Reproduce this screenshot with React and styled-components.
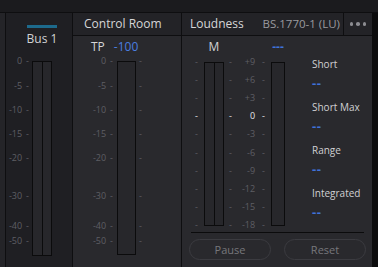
import React from "react";
import styled, { createGlobalStyle } from "styled-components";

const GlobalStyle = createGlobalStyle`
  html, body {
    margin: 0;
    padding: 0;
    background: #0c0c0d;
  }
  body {
    font-family: "Open Sans", "Noto Sans", sans-serif;
  }
`;

// dB scale used by bus + control room meters, y offset from bar top
const dbMarks = [
  { label: "0", y: 0 },
  { label: "-5", y: 25 },
  { label: "-10", y: 49 },
  { label: "-15", y: 73 },
  { label: "-20", y: 97 },
  { label: "-30", y: 135 },
  { label: "-40", y: 165 },
  { label: "-50", y: 180 },
];

const luMarks = ["+9", "+6", "+3", "0", "-3", "-6", "-9", "-12", "-15", "-18"].map(
  (label, i) => ({ label, y: Math.round(i * 18.1), hi: label === "0" })
);

const stats = ["Short", "Short Max", "Range", "Integrated"];

const App = () => {
  return (
    <>
      <GlobalStyle />
      <Screen>
        <TopStrip />
        <Panels>
          <EdgePanel />

          <BusPanel>
            <BusHead>
              <BusStripe />
              <BusName>Bus 1</BusName>
            </BusHead>
            <MeterRow $top={15}>
              <Scale $w={23} $h={195}>
                {dbMarks.map((m) => (
                  <Mark key={m.label} $y={m.y}>
                    {m.label}
                    <Tick>-</Tick>
                  </Mark>
                ))}
              </Scale>
              <Bar $w={20} $h={195} $gap={3}>
                <Channel />
                <Channel />
              </Bar>
            </MeterRow>
          </BusPanel>

          <ControlPanel>
            <PanelHeader>
              <Title>Control Room</Title>
            </PanelHeader>
            <TpRow>
              <TpLabel>TP</TpLabel>
              <TpValue>-100</TpValue>
            </TpRow>
            <MeterRow $top={7}>
              <Scale $w={40} $h={194}>
                {dbMarks.map((m) => (
                  <Mark key={m.label} $y={m.y}>
                    {m.label}
                    <Tick>-</Tick>
                  </Mark>
                ))}
              </Scale>
              <Bar $w={19} $h={194} $gap={4}>
                <Channel />
              </Bar>
              <Scale $w={6} $h={194} $left $gap={3}>
                {dbMarks.map((m) => (
                  <Mark key={m.label} $y={m.y} $left>
                    -
                  </Mark>
                ))}
              </Scale>
            </MeterRow>
          </ControlPanel>

          <LoudPanel>
            <PanelHeader>
              <Title>Loudness</Title>
              <Mode>BS.1770-1 (LU)</Mode>
              <MenuButton>
                <Dot />
                <Dot />
                <Dot />
              </MenuButton>
            </PanelHeader>
            <LoudBody>
              <MeterArea>
                <Scale $w={4} $h={164} $left $top={26}>
                  {luMarks.map((m) => (
                    <Mark key={m.label} $y={m.y} $left $hi={m.hi}>
                      -
                    </Mark>
                  ))}
                </Scale>
                <MeterColumn $gap={5}>
                  <MeterHeading>M</MeterHeading>
                  <Bar $w={20} $h={164}>
                    <Channel />
                    <Channel />
                  </Bar>
                </MeterColumn>
                <Scale $w={4} $h={164} $left $top={26} $gap={5}>
                  {luMarks.map((m) => (
                    <Mark key={m.label} $y={m.y} $left $hi={m.hi}>
                      -
                    </Mark>
                  ))}
                </Scale>
                <Scale $w={32} $h={164} $top={26}>
                  {luMarks.map((m) => (
                    <Mark key={m.label} $y={m.y} $hi={m.hi}>
                      {m.label}
                      <Tick $wide>-</Tick>
                    </Mark>
                  ))}
                </Scale>
                <MeterColumn $gap={6}>
                  <MeterHeading $blue>---</MeterHeading>
                  <Bar $w={14} $h={164}>
                    <Channel />
                  </Bar>
                </MeterColumn>
                <StatList>
                  {stats.map((s) => (
                    <Stat key={s}>
                      <StatLabel>{s}</StatLabel>
                      <StatValue>--</StatValue>
                    </Stat>
                  ))}
                </StatList>
              </MeterArea>
              <Divider />
              <ButtonRow>
                <PillButton>Pause</PillButton>
                <PillButton>Reset</PillButton>
              </ButtonRow>
            </LoudBody>
          </LoudPanel>
        </Panels>
      </Screen>
    </>
  );
};

export default App;

const Screen = styled.div`
  width: 378px;
  height: 267px;
  display: flex;
  flex-direction: column;
  background: #0c0c0d;
  overflow: hidden;
`;

const TopStrip = styled.div`
  height: 12px;
  background: #1b1b1e;
  border-bottom: 1px solid #0e0e10;
  flex-shrink: 0;
`;

const Panels = styled.div`
  flex: 1;
  display: flex;
`;

const EdgePanel = styled.div`
  width: 5px;
  background: #242428;
  border-right: 1px solid #0e0e10;
`;

const BusPanel = styled.div`
  width: 66px;
  background: #1f1f23;
  border-right: 1px solid #0e0e10;
  display: flex;
  flex-direction: column;
`;

const BusHead = styled.div`
  width: 30px;
  margin: 12px 0 0 21px;
  display: flex;
  flex-direction: column;
  align-items: center;
`;

const BusStripe = styled.div`
  width: 100%;
  height: 3px;
  background: #1d6a8c;
`;

const BusName = styled.div`
  margin-top: 4px;
  font-size: 12px;
  line-height: 14px;
  color: #d2d2d4;
  white-space: nowrap;
`;

const MeterRow = styled.div`
  display: flex;
  align-items: flex-start;
  margin-top: ${(p) => p.$top}px;
`;

const Scale = styled.div`
  position: relative;
  flex-shrink: 0;
  width: ${(p) => p.$w}px;
  height: ${(p) => p.$h}px;
  margin-left: ${(p) => p.$gap || 0}px;
  margin-top: ${(p) => p.$top || 0}px;
`;

const Mark = styled.span`
  position: absolute;
  top: ${(p) => p.$y - 6}px;
  ${(p) => (p.$left ? "left: 0;" : "right: 0;")}
  font-size: 9px;
  line-height: 12px;
  white-space: nowrap;
  color: ${(p) => (p.$hi ? "#e6e6e8" : "#5e5e64")};
`;

const Tick = styled.span`
  margin-left: ${(p) => (p.$wide ? 7 : 4)}px;
`;

const Bar = styled.div`
  display: flex;
  flex-shrink: 0;
  box-sizing: border-box;
  width: ${(p) => p.$w}px;
  height: ${(p) => p.$h}px;
  margin-left: ${(p) => p.$gap || 0}px;
  border: 1px solid #0b0b0c;
  background: #27272b;
`;

const Channel = styled.div`
  flex: 1;
  & + & {
    border-left: 1px solid #0b0b0c;
  }
`;

const ControlPanel = styled.div`
  width: 108px;
  background: #29292d;
  border-right: 1px solid #0e0e10;
  display: flex;
  flex-direction: column;
`;

const PanelHeader = styled.div`
  height: 22px;
  flex-shrink: 0;
  display: flex;
  align-items: center;
  padding-left: 11px;
  background: #232327;
  border-bottom: 1px solid #0e0e10;
`;

const Title = styled.div`
  font-size: 12px;
  line-height: 22px;
  color: #d6d6d8;
  white-space: nowrap;
`;

const TpRow = styled.div`
  display: flex;
  margin: 4px 0 0 18px;
  font-size: 12px;
  line-height: 14px;
  gap: 9px;
`;

const TpLabel = styled.span`
  color: #d6d6d8;
`;

const TpValue = styled.span`
  color: #4a7ee0;
`;

const LoudPanel = styled.div`
  width: 190px;
  background: #29292d;
  display: flex;
  flex-direction: column;

  ${PanelHeader} {
    padding-left: 8px;
  }
`;

const Mode = styled.div`
  margin-left: auto;
  padding-right: 3px;
  font-size: 11.5px;
  line-height: 22px;
  color: #9a9a9f;
  white-space: nowrap;
`;

const MenuButton = styled.div`
  width: 28px;
  height: 22px;
  display: flex;
  align-items: center;
  justify-content: center;
  gap: 3px;
  border-left: 1px solid #0e0e10;
`;

const Dot = styled.span`
  width: 3.5px;
  height: 3.5px;
  border-radius: 50%;
  background: #8c8c91;
`;

const LoudBody = styled.div`
  flex: 1;
  display: flex;
  flex-direction: column;
`;

const MeterArea = styled.div`
  height: 196px;
  display: flex;
  align-items: flex-start;
  padding-left: 13px;
`;

const MeterColumn = styled.div`
  display: flex;
  flex-direction: column;
  align-items: center;
  margin-left: ${(p) => p.$gap}px;
`;

const MeterHeading = styled.div`
  margin-top: 4px;
  margin-bottom: 8px;
  height: 14px;
  font-size: 12px;
  font-weight: ${(p) => (p.$blue ? 700 : 400)};
  line-height: 14px;
  color: ${(p) => (p.$blue ? "#3f72d8" : "#d2d2d4")};
`;

const StatList = styled.div`
  display: flex;
  flex-direction: column;
  gap: 10px;
  margin: 21px 0 0 27px;
`;

const Stat = styled.div`
  display: flex;
  flex-direction: column;
  gap: 5px;
`;

const StatLabel = styled.div`
  font-size: 10px;
  line-height: 14px;
  color: #d0d0d3;
  white-space: nowrap;
`;

const StatValue = styled.div`
  font-size: 13px;
  font-weight: 700;
  line-height: 14px;
  letter-spacing: 0.5px;
  color: #3f72d8;
`;

const Divider = styled.div`
  height: 1px;
  margin: 0 8px 0 9px;
  background: #0b0b0c;
`;

const ButtonRow = styled.div`
  display: flex;
  gap: 13px;
  margin: 6px 0 0 7px;
`;

const PillButton = styled.button`
  box-sizing: border-box;
  width: 82px;
  height: 21px;
  padding: 0;
  border: 1px solid #3b3b40;
  border-radius: 11px;
  background: transparent;
  font-family: inherit;
  font-size: 11px;
  color: #77777c;
`;
